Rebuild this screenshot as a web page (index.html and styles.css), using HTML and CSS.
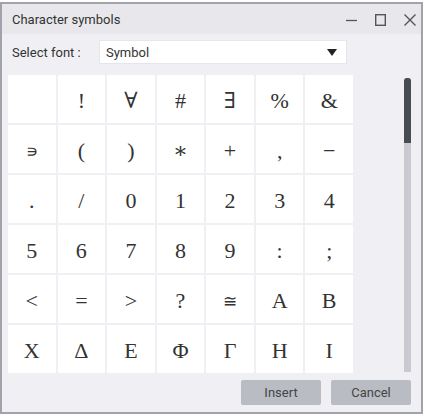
FILE: index.html
```html
<!DOCTYPE html>
<html lang="en">
<head>
    <meta charset="UTF-8">
    <title>Character symbols</title>
    <link rel="stylesheet" href="styles.css">
</head>
<body>
    <div class="window">
        <!-- barra de titulo -->
        <div class="titlebar">
            <span class="title">Character symbols</span>
            <div class="controls">
                <svg width="11" height="12" viewBox="0 0 11 12"><path d="M0 6.5 H11" stroke="#555" stroke-width="1.3"/></svg>
                <svg width="11" height="12" viewBox="0 0 11 12"><rect x="0.7" y="0.7" width="9.6" height="10.6" fill="none" stroke="#555" stroke-width="1.4"/></svg>
                <svg width="12" height="12" viewBox="0 0 12 12"><path d="M0.5 0.5 L11.5 11.5 M11.5 0.5 L0.5 11.5" stroke="#555" stroke-width="1.4"/></svg>
            </div>
        </div>

        <div class="content">
            <div class="font-row">
                <label for="fontSelect">Select font :</label>
                <div class="select" id="fontSelect">
                    <span>Symbol</span>
                    <span class="arrow"></span>
                </div>
            </div>

            <div class="grid-area">
                <div class="grid-clip">
                    <div class="grid">
                        <div class="cell"></div>
                        <div class="cell">!</div>
                        <div class="cell">&#8704;</div>
                        <div class="cell">#</div>
                        <div class="cell">&#8707;</div>
                        <div class="cell">%</div>
                        <div class="cell">&amp;</div>

                        <div class="cell small">&#8717;</div>
                        <div class="cell">(</div>
                        <div class="cell">)</div>
                        <div class="cell">&#8727;</div>
                        <div class="cell">+</div>
                        <div class="cell">,</div>
                        <div class="cell">&#8722;</div>

                        <div class="cell">.</div>
                        <div class="cell">/</div>
                        <div class="cell">0</div>
                        <div class="cell">1</div>
                        <div class="cell">2</div>
                        <div class="cell">3</div>
                        <div class="cell">4</div>

                        <div class="cell">5</div>
                        <div class="cell">6</div>
                        <div class="cell">7</div>
                        <div class="cell">8</div>
                        <div class="cell">9</div>
                        <div class="cell">:</div>
                        <div class="cell">;</div>

                        <div class="cell">&lt;</div>
                        <div class="cell">=</div>
                        <div class="cell">&gt;</div>
                        <div class="cell">?</div>
                        <div class="cell small">&#8773;</div>
                        <div class="cell">&#913;</div>
                        <div class="cell">&#914;</div>

                        <div class="cell">&#935;</div>
                        <div class="cell">&#916;</div>
                        <div class="cell">&#917;</div>
                        <div class="cell">&#934;</div>
                        <div class="cell">&#915;</div>
                        <div class="cell">&#919;</div>
                        <div class="cell">&#921;</div>

                        <!-- fila siguiente, casi oculta por el scroll -->
                        <div class="cell"></div>
                        <div class="cell"></div>
                        <div class="cell"></div>
                        <div class="cell"></div>
                        <div class="cell"></div>
                        <div class="cell"></div>
                        <div class="cell"></div>
                    </div>
                </div>
                <div class="scrollbar">
                    <div class="thumb"></div>
                </div>
            </div>

            <div class="buttons">
                <button>Insert</button>
                <button>Cancel</button>
            </div>
        </div>
    </div>
</body>
</html>
```

FILE: styles.css
```css
body {
    margin: 0;
    background-color: #ffffff;
    font-family: Roboto, "Noto Sans", sans-serif;
    color: #333;
}

.window {
    margin-top: 2px;
    width: 423px;
    height: 412px;
    box-sizing: border-box;
    border: 2px solid #a2a2aa;
    background-color: #f0f0f4;
    display: flex;
    flex-direction: column;
}

.titlebar {
    height: 30px;
    background-color: #e8e8ec;
    display: flex;
    align-items: center;
    justify-content: space-between;
    padding: 0 5px 0 10px;
}

.title {
    font-size: 13px;
    color: #333;
}

.controls {
    display: flex;
    gap: 18px;
    padding-top: 1px;
}

.controls svg {
    display: block;
}

.content {
    flex: 1;
    padding: 6px 10px 6px 6px;
    display: flex;
    flex-direction: column;
}

.font-row {
    display: flex;
    align-items: center;
    height: 24px;
}

.font-row label {
    width: 91px;
    box-sizing: border-box;
    padding-left: 4px;
    font-size: 13px;
}

.select {
    width: 248px;
    height: 24px;
    box-sizing: border-box;
    background-color: #ffffff;
    border: 1px solid #e6e6ea;
    display: flex;
    align-items: center;
    justify-content: space-between;
    padding: 0 9px 0 6px;
    font-size: 13px;
}

.arrow {
    width: 0;
    height: 0;
    border-left: 5px solid transparent;
    border-right: 5px solid transparent;
    border-top: 7px solid #222;
}

.grid-area {
    display: flex;
    justify-content: space-between;
    margin-top: 11px;
    height: 300px;
}

.grid-clip {
    width: 345px;
    height: 300px;
    overflow: hidden;
}

.grid {
    display: grid;
    grid-template-columns: repeat(7, 1fr);
    grid-auto-rows: 48px;
    gap: 2px;
}

.cell {
    background-color: #ffffff;
    display: flex;
    align-items: center;
    justify-content: center;
    padding-top: 4px;
    box-sizing: border-box;
    font-family: "Liberation Serif", "DejaVu Serif", serif;
    font-size: 22px;
    color: #333;
}

.cell.small {
    font-size: 17px;
}

.scrollbar {
    width: 7px;
    margin-top: 3px;
    height: 294px;
    background-color: #c9cad1;
    border-radius: 3px 3px 0 0;
}

.thumb {
    height: 65px;
    background-color: #474b52;
    border-radius: 3px 3px 0 0;
}

.buttons {
    display: flex;
    justify-content: flex-end;
    gap: 10px;
    margin-top: 5px;
}

button {
    width: 80px;
    height: 25px;
    border: none;
    border-radius: 2px;
    background-color: #babcc4;
    color: #444;
    font-family: Roboto, "Noto Sans", sans-serif;
    font-size: 13px;
    padding: 0;
}
```
